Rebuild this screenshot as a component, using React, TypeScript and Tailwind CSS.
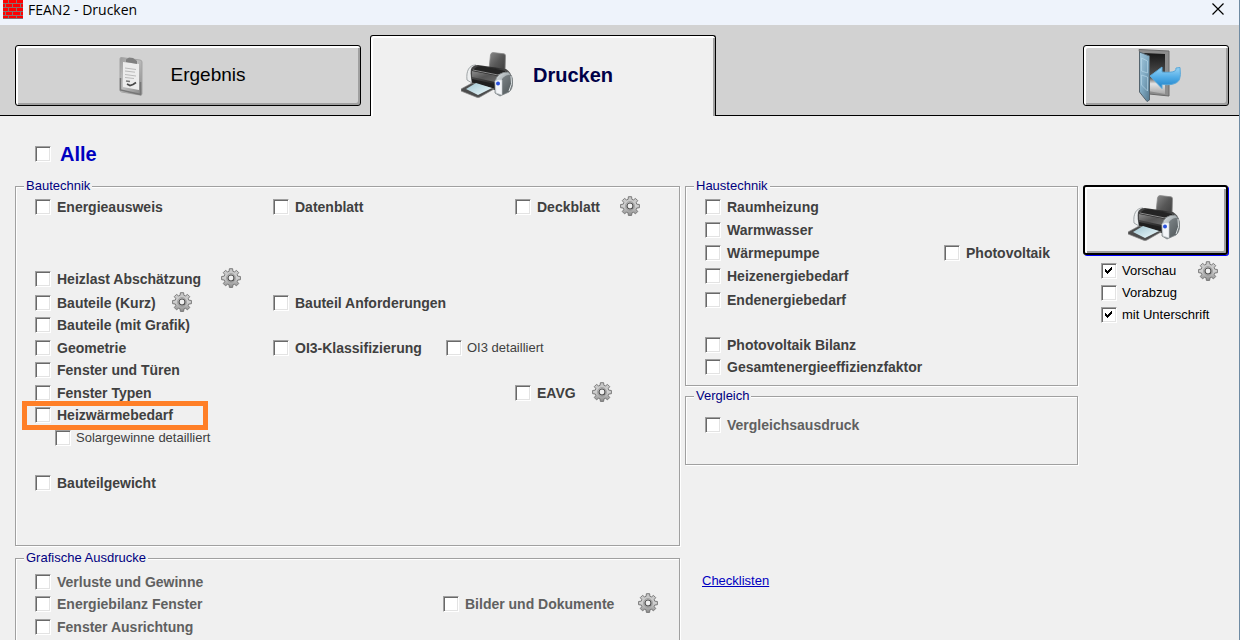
import React, { useState } from 'react';
import clsx from 'clsx';

type CheckProps = {
  label: string;
  className?: string;
  variant?: 'bold' | 'muted' | 'small' | 'dark' | 'title';
  defaultChecked?: boolean;
  gear?: string;
  marked?: boolean;
};

const labelStyles = {
  bold: 'text-sm font-bold text-[#404040] gap-[6px]',
  muted: 'text-sm font-bold text-[#606060] gap-[6px]',
  small: 'text-[13px] text-[#404040] gap-[5px]',
  dark: 'text-[13px] text-black gap-[5px]',
  title: 'text-xl font-bold text-[#0000c0] gap-[9px]',
};

function Check({ label, className, variant = 'bold', defaultChecked = false, gear, marked }: CheckProps) {
  const [checked, setChecked] = useState(defaultChecked);

  return (
    <div className={clsx('relative flex min-w-0 items-center whitespace-nowrap', className)}>
      <label className={clsx('flex items-center', labelStyles[variant])}>
        <span className="relative flex shrink-0">
          <input
            type="checkbox"
            checked={checked}
            onChange={() => setChecked(!checked)}
            className="size-4 appearance-none border border-t-[#a0a0a0] border-l-[#a0a0a0] border-r-white border-b-white bg-white shadow-[inset_1px_1px_0_#696969,inset_-1px_-1px_0_#e3e3e3]"
          />
          {checked && (
            <svg viewBox="0 0 16 16" className="pointer-events-none absolute inset-0 size-4" shapeRendering="crispEdges">
              <path d="M4 6h1v1h1v1h1v-1h1v-1h1v-1h1v-1h1v3h-1v1h-1v1h-1v1h-1v1h-1v-1h-1v-1h-1z" fill="#000" />
            </svg>
          )}
        </span>
        {label}
      </label>
      {gear && <GearButton className={clsx('mb-[2px]', gear)} />}
      {marked && (
        <span className="pointer-events-none absolute -left-[13px] -top-[3px] h-[29px] w-[186px] border-[5px] border-[#ff7f27]" />
      )}
    </div>
  );
}

function GearButton({ className }: { className?: string }) {
  return (
    <button type="button" aria-label="Einstellungen" className={clsx('size-5 shrink-0', className)}>
      <svg viewBox="0 0 20 20" className="size-5">
        <defs>
          <linearGradient id="gear" x1="0" y1="0" x2="0" y2="1">
            <stop offset="0" stopColor="#c4c4c4" />
            <stop offset="0.5" stopColor="#d0d0d0" />
            <stop offset="1" stopColor="#8c8c8c" />
          </linearGradient>
        </defs>
        <path
          d="M8.4.7h3.2l.3 2.600 1.500.6 2.100-1.500 2.200 2.200-1.500 2.100.6 1.500 2.600.3v3.200l-2.600.3-.6 1.500 1.500 2.100-2.200 2.200-2.100-1.500-1.500.6-.3 2.500H8.4l-.3-2.500-1.500-.6-2.100 1.500-2.200-2.200 1.500-2.100-.6-1.500-2.600-.3V8.500l2.600-.3.6-1.500-1.500-2.100 2.200-2.200 2.100 1.500 1.500-.6z"
          fill="url(#gear)"
          stroke="#707070"
          strokeWidth=".9"
        />
        <circle cx="10" cy="10" r="4.500" fill="none" stroke="#999" strokeWidth=".8" />
        <circle cx="10" cy="10" r="3" fill="#f0f0f0" stroke="#505050" strokeWidth="1.200" />
      </svg>
    </button>
  );
}

function PrinterIcon() {
  return (
    <svg viewBox="0 0 52 46" className="h-[46px] w-[52px]">
      <defs>
        <linearGradient id="pr-tray" x1="0" y1="0" x2="1" y2="1">
          <stop offset="0" stopColor="#8a8a8a" />
          <stop offset="0.5" stopColor="#585858" />
          <stop offset="1" stopColor="#3c3c3c" />
        </linearGradient>
        <linearGradient id="pr-body" x1="0" y1="0" x2="1" y2="0">
          <stop offset="0" stopColor="#484848" />
          <stop offset="0.6" stopColor="#2a2a2a" />
          <stop offset="1" stopColor="#5a5a5a" />
        </linearGradient>
        <linearGradient id="pr-lid" x1="0" y1="0" x2="1" y2="1">
          <stop offset="0" stopColor="#8c8c8c" />
          <stop offset="0.5" stopColor="#565656" />
          <stop offset="1" stopColor="#6c6c6c" />
        </linearGradient>
        <linearGradient id="pr-side" x1="0" y1="0" x2="1" y2="1">
          <stop offset="0" stopColor="#e8ecee" />
          <stop offset="0.4" stopColor="#a9b1b4" />
          <stop offset="1" stopColor="#454c4e" />
        </linearGradient>
        <linearGradient id="pr-paper" x1="0" y1="0" x2="1" y2="1">
          <stop offset="0" stopColor="#9fc4d0" />
          <stop offset="1" stopColor="#effbfd" />
        </linearGradient>
      </defs>
      <path d="M15 13C8 13 5 19 6 28l5 3V18z" fill="#eceeef" stroke="#a0a5a7" />
      <path d="M28 17l1.500-14Q30 .6 32 .6l11 1.200q1.600.3 1.500 2L44 20z" fill="url(#pr-tray)" stroke="#8a8a8a" strokeWidth=".8" />
      <path d="M10 17q2-4 7-4l28 4q5 3 6 8l-9 15-31-9q-2-8-1-14z" fill="url(#pr-body)" />
      <path d="M13 17q3-3 7-3l24 5 3 1q-6 1-10 5l-26-5z" fill="#242424" />
      <path d="M11 19l26 5-3 6-23-5z" fill="url(#pr-lid)" />
      <path d="M12 18l25 5 8-3" fill="none" stroke="#a4a4a4" strokeWidth=".8" />
      <path d="M11 27l23 5v6l-23-6z" fill="#1f1f1f" />
      <path d="M34 30q2-10 13-10 5 4 5 11-1 7-4 9l-9 4-5-3z" fill="url(#pr-side)" stroke="#7d8486" strokeWidth=".8" />
      <path d="M41 27q5-6 10-3 1 9-3 15l-7 4z" fill="#50575a" opacity=".6" />
      <path d="M50 24q2 8-2 15" fill="none" stroke="#dfe4e6" />
      <path d="M34 29q3-2 7-1v15l-6-2z" fill="#f3f5f8" stroke="#c3c8cb" strokeWidth=".6" />
      <circle cx="37" cy="31.500" r="2" fill="#2850dc" />
      <path d="M0 37l11-6 22 6-14 8q-2 1-4 0L0 39z" fill="#4d4d4d" stroke="#8a8a8a" strokeWidth=".7" />
      <path d="M5 37l10-6 16 5-14 7z" fill="url(#pr-paper)" />
    </svg>
  );
}

function ClipboardIcon() {
  return (
    <svg viewBox="0 0 24 40" className="h-10 w-6">
      <defs>
        <linearGradient id="clip" x1="0" y1="0" x2="1" y2="1">
          <stop offset="0" stopColor="#9a9a9a" />
          <stop offset="0.4" stopColor="#c4c4c4" />
          <stop offset="1" stopColor="#858585" />
        </linearGradient>
      </defs>
      <path d="M2 1.500 21 4q2 .3 2 2v32q-.3 1.500-2 1L2.500 36Q1 35.500 1 34V3q0-1.500 1-1.500z" fill="url(#clip)" stroke="#a4a4a4" />
      <path d="M1.500 22v12l20 4.500V26" fill="none" stroke="#777" strokeWidth="1.500" />
      <path d="M4 6l16 2v26L4 31z" fill="#ececec" />
      <path d="M7 3.500 10 1.500l4 .5 4 3v3L7 6z" fill="#808080" />
      <path d="M6 12l11 1.500M6 15l10 1.200M6 18.500l11 1.500M6 21.500l9 1" stroke="#bababa" />
      <path d="M7 25l4 .6" stroke="#777" strokeWidth="1.500" />
      <path d="M8 28l3 1.500 3-1 3-2" fill="none" stroke="#484848" strokeWidth="1.800" />
    </svg>
  );
}

function ExitIcon() {
  return (
    <svg viewBox="0 0 44 54" className="h-[54px] w-11">
      <defs>
        <linearGradient id="door" x1="0" y1="0" x2="1" y2="1">
          <stop offset="0" stopColor="#a5c9dd" />
          <stop offset="0.5" stopColor="#7fa9c2" />
          <stop offset="1" stopColor="#56788d" />
        </linearGradient>
        <linearGradient id="arrow" x1="0" y1="0" x2="0" y2="1">
          <stop offset="0" stopColor="#9ad6f7" />
          <stop offset="0.5" stopColor="#4fabe6" />
          <stop offset="1" stopColor="#1c7fc6" />
        </linearGradient>
        <linearGradient id="inside" x1="0" y1="0" x2="0" y2="1">
          <stop offset="0" stopColor="#171717" />
          <stop offset="0.6" stopColor="#555" />
          <stop offset="0.75" stopColor="#e4e4e4" />
          <stop offset="1" stopColor="#a8a8a8" />
        </linearGradient>
      </defs>
      <path d="M1 .5l30 1.500v45l-20-2z" fill="#8d8d8d" stroke="#6a6a6a" />
      <path d="M5 4l22 1v40l-17-3z" fill="url(#inside)" />
      <path d="M1.500 3 11.500 7v44L9 52.500 1.500 43z" fill="url(#door)" stroke="#55646e" />
      <path d="M3.500 9l6 3v12l-6-2zM3.500 26l6 2v14l-6-6z" fill="none" stroke="#bcdcec" opacity=".6" />
      <path d="M12 27 24 18v5q9 1 13-1 1-1 1-3l4-.5q1 8-.5 12-2 4-8.500 5-4 .5-9 0v4z" fill="url(#arrow)" stroke="#5ba8d8" />
    </svg>
  );
}

function BrickIcon() {
  return (
    <svg viewBox="0 0 20 19" className="h-[19px] w-5" shapeRendering="crispEdges">
      <rect width="20" height="19" fill="#f00" />
      <path d="M0 3h20M0 7h20M0 11h20M0 15h20M0 18h20" transform="translate(0 .5)" stroke="#8a7070" />
      <path d="M5 0v3M13 0v3M2 4v3M9 4v3M17 4v3M5 8v3M13 8v3M2 12v3M9 12v3M17 12v3M5 16v2M13 16v2" stroke="#8a7070" />
    </svg>
  );
}

function Group({ title, className, children }: { title: string; className?: string; children: React.ReactNode }) {
  return (
    <fieldset
      className={clsx(
        'min-w-0 border border-[#a0a0a0] pl-[19px] shadow-[1px_1px_0_#fff,inset_1px_1px_0_#fff]',
        className
      )}
    >
      <legend className="-ml-[11px] bg-[#f0f0f0] px-[2px] text-[13px] leading-4 text-[#000080]">{title}</legend>
      {children}
    </fieldset>
  );
}

const raised = 'flex items-center justify-center rounded-[3px] border border-black';

export default function App() {
  return (
    <div className="flex h-screen flex-col overflow-hidden border-r border-[#6f8ba3] bg-[#f0f0f0] font-['Liberation_Sans',Arial,sans-serif]">
      {/* Title bar */}
      <header className="flex h-[25px] shrink-0 items-start justify-between bg-[#eef3fb] pl-[3px] pr-[14px]">
        <div className="flex items-start gap-[5px]">
          <BrickIcon />
          <h1 className="font-['Open_Sans',sans-serif] text-sm leading-5 text-black">FEAN2 - Drucken</h1>
        </div>
        <button type="button" aria-label="Schließen" className="mt-[2px]">
          <svg viewBox="0 0 14 14" className="size-[14px]">
            <path d="M1.500 1.500l11 11M12.500 1.500l-11 11" stroke="#000" strokeWidth="1.200" />
          </svg>
        </button>
      </header>

      {/* Tabs */}
      <nav className="flex h-[91px] shrink-0 bg-[#d2d2d2]">
        <div className="flex w-[370px] items-start border-b border-black pl-[15px] pt-5">
          <button
            type="button"
            className={clsx(raised, 'h-[61px] w-[346px] gap-7 pr-3 text-[19px] shadow-[inset_2px_2px_0_#fff,inset_-2px_-2px_0_#a0a0a0]')}
          >
            <ClipboardIcon />
            Ergebnis
          </button>
        </div>
        <button
          type="button"
          className="mt-[10px] flex w-[346px] items-center justify-center gap-5 rounded-t-[3px] border border-b-0 border-black bg-[#f0f0f0] pb-[2px] pr-3 text-xl font-bold text-[#000048] shadow-[inset_2px_2px_0_#fff,inset_-2px_0_0_#a0a0a0]"
        >
          <PrinterIcon />
          Drucken
        </button>
        <div className="flex flex-1 items-start justify-end border-b border-black pr-[10px] pt-5">
          <button
            type="button"
            aria-label="Beenden"
            className={clsx(raised, 'h-[61px] w-[146px] pl-2 shadow-[inset_2px_2px_0_#fff,inset_-2px_-2px_0_#a0a0a0]')}
          >
            <ExitIcon />
          </button>
        </div>
      </nav>

      <main className="flex flex-1 flex-col pl-[15px] pr-[10px]">
        <Check label="Alle" variant="title" className="mb-[10px] mt-6 h-7 pl-5" />

        <div className="grid grid-cols-[665fr_393fr_146px] gap-[5px]">
          {/* Left column */}
          <div className="flex flex-col gap-1">
            <Group title="Bautechnik" className="pb-[51px] pt-[2px]">
              <div className="grid grid-cols-[238fr_173fr_69fr_164fr] grid-rows-[22px_49px_24px_23px_22px_23px_22px_23px_22px_23px_23px_22px]">
                <Check label="Energieausweis" className="col-start-1 row-start-1" />
                <Check label="Datenblatt" className="col-start-2 row-start-1" />
                <Check label="Deckblatt" className="col-start-4 row-start-1" gear="ml-5" />
                <Check label="Heizlast Abschätzung" className="col-start-1 row-start-3" gear="ml-5" />
                <Check label="Bauteile (Kurz)" className="col-start-1 row-start-4" gear="ml-4" />
                <Check label="Bauteil Anforderungen" className="col-start-2 row-start-4" />
                <Check label="Bauteile (mit Grafik)" className="col-start-1 row-start-5" />
                <Check label="Geometrie" className="col-start-1 row-start-6" />
                <Check label="OI3-Klassifizierung" className="col-start-2 row-start-6" />
                <Check label="OI3 detailliert" variant="small" className="col-start-3 row-start-6" />
                <Check label="Fenster und Türen" className="col-start-1 row-start-7" />
                <Check label="Fenster Typen" className="col-start-1 row-start-8" />
                <Check label="EAVG" className="col-start-4 row-start-8" gear="ml-4" />
                <Check label="Heizwärmebedarf" className="col-start-1 row-start-9" marked />
                <Check label="Solargewinne detailliert" variant="small" className="col-start-1 row-start-10 pl-5" />
                <Check label="Bauteilgewicht" className="col-start-1 row-start-12" />
              </div>
            </Group>

            <Group title="Grafische Ausdrucke" className="pb-6 pt-[5px]">
              <div className="grid grid-cols-[408fr_236fr] grid-rows-[22px_22px_23px]">
                <Check label="Verluste und Gewinne" variant="muted" className="col-start-1 row-start-1" />
                <Check label="Energiebilanz Fenster" variant="muted" className="col-start-1 row-start-2" />
                <Check label="Bilder und Dokumente" variant="muted" className="col-start-2 row-start-2" gear="ml-6" />
                <Check label="Fenster Ausrichtung" variant="muted" className="col-start-1 row-start-3" />
              </div>
            </Group>
          </div>

          {/* Middle column */}
          <div className="flex flex-col gap-[2px]">
            <Group title="Haustechnik" className="pb-[7px] pt-[2px]">
              <div className="grid grid-cols-[239fr_133fr] grid-rows-[22px_23px_23px_24px_23px_23px_22px_22px]">
                <Check label="Raumheizung" className="col-start-1 row-start-1" />
                <Check label="Warmwasser" className="col-start-1 row-start-2" />
                <Check label="Wärmepumpe" className="col-start-1 row-start-3" />
                <Check label="Photovoltaik" className="col-start-2 row-start-3" />
                <Check label="Heizenergiebedarf" className="col-start-1 row-start-4" />
                <Check label="Endenergiebedarf" className="col-start-1 row-start-5" />
                <Check label="Photovoltaik Bilanz" className="col-start-1 row-start-7" />
                <Check label="Gesamtenergieeffizienzfaktor" className="col-start-1 row-start-8" />
              </div>
            </Group>

            <Group title="Vergleich" className="pb-7 pt-[10px]">
              <Check label="Vergleichsausdruck" variant="muted" className="h-[22px]" />
            </Group>

            <a href="#checklisten" className="ml-[17px] mt-[106px] self-start text-[13px] leading-4 text-[#0000c0] underline">
              Checklisten
            </a>
          </div>

          {/* Print actions */}
          <div className="flex flex-col pt-[7px]">
            <button
              type="button"
              aria-label="Drucken"
              className="mb-[5px] mr-px flex h-[70px] items-center justify-center rounded-[3px] border-2 border-black pb-1 pr-1 shadow-[1px_1px_0_#00f,inset_2px_2px_0_#fff,inset_-2px_-2px_0_#a0a0a0]"
            >
              <PrinterIcon />
            </button>
            <div className="flex flex-col pl-[18px]">
              <div className="flex items-center justify-between pr-[11px]">
                <Check label="Vorschau" variant="dark" className="h-[22px]" defaultChecked />
                <GearButton />
              </div>
              <Check label="Vorabzug" variant="dark" className="h-[22px]" />
              <Check label="mit Unterschrift" variant="dark" className="h-[22px]" defaultChecked />
            </div>
          </div>
        </div>
      </main>
    </div>
  );
}
